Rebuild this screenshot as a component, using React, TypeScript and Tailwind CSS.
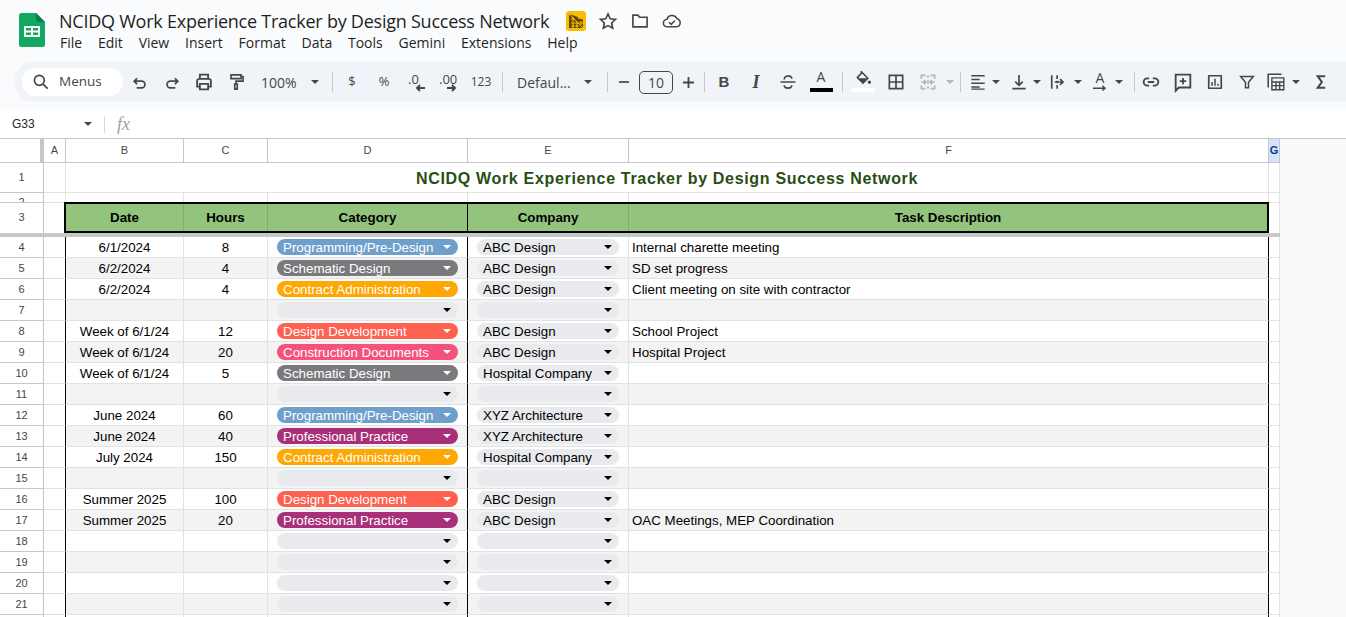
import React from "react";

const C = "#444746";

function Ic({ children, size = "w-5 h-5", fill = false }: { children: React.ReactNode; size?: string; fill?: boolean }) {
  return (
    <svg viewBox="0 0 24 24" className={size} fill={fill ? C : "none"} stroke={fill ? "none" : C} strokeWidth={2} strokeLinejoin="miter">
      {children}
    </svg>
  );
}

function Caret({ color = C, w = "w-2", h = "h-1" }: { color?: string; w?: string; h?: string }) {
  return (
    <svg viewBox="0 0 8 4" className={`${w} ${h}`}>
      <polygon points="0,0 8,0 4,4" fill={color} />
    </svg>
  );
}

function Slot({ children, className = "w-8" }: { children?: React.ReactNode; className?: string }) {
  return <div className={`${className} h-7 shrink-0 flex items-center justify-center`}>{children}</div>;
}

function Sep({ className }: { className: string }) {
  return <div className={`w-px h-5 shrink-0 bg-[#c7c7c7] ${className}`} />;
}

const Undo = () => (
  <Ic><path d="M8.500 7.500 5 11l3.500 3.500M5.500 11H14a4 4 0 0 1 0 8H8" /></Ic>
);
const Redo = () => (
  <Ic><path d="M15.500 7.500 19 11l-3.500 3.500M18.500 11H10a4 4 0 0 0 0 8h6" /></Ic>
);
const Print = () => (
  <Ic size="w-[22px] h-[22px]">
    <path d="M7.500 8V4h9v4" />
    <path d="M7 17H4.500v-6a2.500 2.500 0 0 1 2.500-2.500h10a2.500 2.500 0 0 1 2.500 2.500v6H17" />
    <path d="M7.500 14h9v6h-9z" />
  </Ic>
);
const Paint = () => (
  <Ic>
    <path d="M6 3.500h12v4.500H6zM18 5.500h2.500v5.500H12v3" />
    <path d="M10.500 14.500h3v6h-3z" />
  </Ic>
);
const DecLess = () => (
  <div className="relative w-7 h-6">
    <span className="absolute left-[6px] top-0 text-[13px] font-medium text-[#444746]">.0</span>
    <svg viewBox="0 0 10 8" className="absolute left-[13px] top-[14px] w-[10px] h-2">
      <path d="M10 4H2M5 1 2 4l3 3" fill="none" stroke={C} strokeWidth={2} />
    </svg>
  </div>
);
const DecMore = () => (
  <div className="relative w-7 h-6">
    <span className="absolute left-[5px] top-0 text-[13px] font-medium text-[#444746]">.00</span>
    <svg viewBox="0 0 10 8" className="absolute left-[13px] top-[14px] w-[10px] h-2">
      <path d="M0 4h8M5 1l3 3-3 3" fill="none" stroke={C} strokeWidth={2} />
    </svg>
  </div>
);

function Pill({ label, color, wide }: { label?: string; color?: string; wide: boolean }) {
  const colored = !!color;
  return (
    <div
      className={`${wide ? "w-[181px]" : "w-[142px]"} ml-[9px] h-4 mt-[2px] rounded-full flex items-center pl-[6px] pr-[7px] justify-between ${colored ? "text-white" : "text-black"}`}
      style={{ backgroundColor: color ?? "#e8eaed" }}
    >
      <span className="leading-4 pt-[2px] whitespace-nowrap">{label}</span>
      <Caret color={colored ? "#ffffff" : "#000000"} />
    </div>
  );
}

type Row = { n: number; date?: string; hours?: string; cat?: [string, string]; co?: string; task?: string };

const PROG: [string, string] = ["Programming/Pre-Design", "#6fa0cb"];
const SCH: [string, string] = ["Schematic Design", "#7a7a7e"];
const CA: [string, string] = ["Contract Administration", "#ffa703"];
const DD: [string, string] = ["Design Development", "#ff6150"];
const CD: [string, string] = ["Construction Documents", "#f4527c"];
const PP: [string, string] = ["Professional Practice", "#a92f7b"];

const rows: Row[] = [
  { n: 4, date: "6/1/2024", hours: "8", cat: PROG, co: "ABC Design", task: "Internal charette meeting" },
  { n: 5, date: "6/2/2024", hours: "4", cat: SCH, co: "ABC Design", task: "SD set progress" },
  { n: 6, date: "6/2/2024", hours: "4", cat: CA, co: "ABC Design", task: "Client meeting on site with contractor" },
  { n: 7 },
  { n: 8, date: "Week of 6/1/24", hours: "12", cat: DD, co: "ABC Design", task: "School Project" },
  { n: 9, date: "Week of 6/1/24", hours: "20", cat: CD, co: "ABC Design", task: "Hospital Project" },
  { n: 10, date: "Week of 6/1/24", hours: "5", cat: SCH, co: "Hospital Company" },
  { n: 11 },
  { n: 12, date: "June 2024", hours: "60", cat: PROG, co: "XYZ Architecture" },
  { n: 13, date: "June 2024", hours: "40", cat: PP, co: "XYZ Architecture" },
  { n: 14, date: "July 2024", hours: "150", cat: CA, co: "Hospital Company" },
  { n: 15 },
  { n: 16, date: "Summer 2025", hours: "100", cat: DD, co: "ABC Design" },
  { n: 17, date: "Summer 2025", hours: "20", cat: PP, co: "ABC Design", task: "OAC Meetings, MEP Coordination" },
  { n: 18 },
  { n: 19 },
  { n: 20 },
  { n: 21 },
];

const hdrCell = "shrink-0 flex items-center justify-center border-r border-[#c7c7c7] text-[11px] text-[#444746]";

function RowHead({ n, className = "" }: { n?: number; className?: string }) {
  return (
    <div className={`w-[44px] shrink-0 flex items-center justify-center border-r border-b border-[#c7c7c7] text-[11px] text-[#444746] bg-white ${className}`}>
      {n}
    </div>
  );
}

export default function App() {
  return (
    <div className="w-[1346px] h-[617px] overflow-hidden bg-white flex flex-col font-['Liberation_Sans',Arial,sans-serif]">
      {/* top chrome */}
      <div className="h-[110px] shrink-0 bg-[#f9fbfd] flex flex-col">
        <div className="h-[62px] flex items-start">
          <svg viewBox="0 0 26 34" className="w-[26px] h-[34px] ml-[19px] mt-[13px] shrink-0">
            <path d="M2.500 0H17l9 9v22.500a2.500 2.500 0 0 1-2.500 2.500h-21A2.500 2.500 0 0 1 0 31.500v-29A2.500 2.500 0 0 1 2.500 0z" fill="#11a861" />
            <path d="M17 0l9 9h-6.500A2.500 2.500 0 0 1 17 6.500z" fill="#0d7d48" />
            <path d="M5 13h16v11H5z M7 15v2.500h5V15z M14 15v2.500h5V15z M7 19.500V22h5v-2.500z M14 19.500V22h5v-2.500z" fill="#ffffff" fillRule="evenodd" />
          </svg>
          <div className="ml-[14px] flex flex-col font-['Open_Sans',sans-serif] text-[#1f1f1f]">
            <div className="flex items-center h-[25px] mt-[8px]">
              <span className="text-[18px] leading-6 whitespace-nowrap w-[507px] tracking-[-0.24px]">NCIDQ Work Experience Tracker by Design Success Network</span>
              <div className="w-5 h-5 rounded-[3px] bg-[#fbbc04] flex items-center justify-center shrink-0">
                <svg viewBox="0 0 20 20" className="w-5 h-5">
                  <path d="M3 3v14h14V8.500l-5-1v-1.500L3 3z" fill="#5f4a06" />
                  <path d="M2 2l16 16M6 7h2v2H6zM6 11h2v2H6zM6 14.500h2v1.500H6zM10 11h2v2h-2zM14 11h2v2h-2zM10 14.500h2v1.500h-2z" stroke="#fbbc04" strokeWidth={1} fill="none" />
                </svg>
              </div>
              <div className="w-8 h-6 flex items-center justify-center ml-[6px]">
                <svg viewBox="0 0 24 24" className="w-5 h-5" fill="none" stroke={C} strokeWidth={2}>
                  <path d="M12 3.500l2.700 5.800 6.300.8-4.600 4.300 1.200 6.200L12 17.500l-5.600 3.100 1.200-6.200L3 10.100l6.300-.8z" />
                </svg>
              </div>
              <div className="w-8 h-6 flex items-center justify-center">
                <svg viewBox="0 0 24 24" className="w-5 h-5" fill="none" stroke={C} strokeWidth={2}>
                  <path d="M3.500 5h6l2 2.500h9v11.500h-17z" />
                </svg>
              </div>
              <div className="w-8 h-6 flex items-center justify-center">
                <svg viewBox="0 0 24 24" className="w-5 h-5" fill="none" stroke={C} strokeWidth={1.800}>
                  <path d="M6.500 19a4.500 4.500 0 0 1-.6-9A6.500 6.500 0 0 1 18 9.200 5 5 0 0 1 17.500 19z" />
                  <path d="M8.500 13.500l2.500 2.500 4.500-4.500" />
                </svg>
              </div>
            </div>
            <div className="flex items-center h-[22px] mt-[-1px] gap-[15.8px] text-[14px] ml-[1px] text-[#1f1f1f]">
              {["File", "Edit", "View", "Insert", "Format", "Data", "Tools", "Gemini", "Extensions", "Help"].map((m) => (
                <span key={m} className="whitespace-nowrap leading-5">{m}</span>
              ))}
            </div>
          </div>
        </div>
        {/* toolbar */}
        <div className="h-10 ml-[14px] bg-[#f0f4f9] rounded-l-[20px] flex items-center font-['Open_Sans',sans-serif] text-[#444746]">
          <div className="w-[101px] h-7 ml-[8px] mr-px rounded-full bg-white flex items-center shrink-0">
            <svg viewBox="0 0 24 24" className="w-5 h-5 ml-[9px]" fill="none" stroke={C} strokeWidth={2}>
              <circle cx="10" cy="10" r="6" />
              <path d="M14.500 14.500 20 20" />
            </svg>
            <span className="ml-[8px] text-[13.500px] leading-5 mt-[-2px]">Menus</span>
          </div>
          <Slot><Undo /></Slot>
          <Slot><Redo /></Slot>
          <Slot><Print /></Slot>
          <Slot><Paint /></Slot>
          <div className="w-[73px] h-7 shrink-0 flex items-center justify-between pl-[9px] pr-[6px]">
            <span className="text-[14px] leading-5 pt-[2px]">100%</span>
            <Caret />
          </div>
          <Sep className="ml-[7px] mr-[3px]" />
          <Slot><span className="text-[13px] font-medium">$</span></Slot>
          <Slot><span className="text-[13px] font-medium">%</span></Slot>
          <Slot><DecLess /></Slot>
          <Slot><DecMore /></Slot>
          <Slot className="w-8 ml-px"><span className="text-[12px]">123</span></Slot>
          <Sep className="ml-[5px]" />
          <div className="w-[75px] ml-[14px] h-7 shrink-0 flex items-center justify-between">
            <span className="text-[14px]">Defaul...</span>
            <Caret />
          </div>
          <Sep className="ml-[15px]" />
          <Slot className="w-[31px]">
            <svg viewBox="0 0 12 2" className="w-[10px] h-[2px]"><rect width="12" height="2" fill={C} /></svg>
          </Slot>
          <div className="w-[34px] h-[23px] rounded-[5px] border border-[#444746] flex items-center justify-center text-[14px] shrink-0">10</div>
          <Slot className="w-[30px]">
            <svg viewBox="0 0 12 12" className="w-[11px] h-[11px]"><path d="M5 0h2v5h5v2H7v5H5V7H0V5h5z" fill={C} /></svg>
          </Slot>
          <Sep className="ml-px mr-[3px]" />
          <Slot><span className="font-['Liberation_Sans',sans-serif] font-bold text-[15px]">B</span></Slot>
          <Slot><span className="font-['Liberation_Serif',serif] font-bold italic text-[18px]">I</span></Slot>
          <Slot>
            <Ic><path d="M3 12h18M7.500 9c0-5.500 9-5.500 9-1M7.500 16c0 4.500 9 4.500 9 0" /></Ic>
          </Slot>
          <div className="w-8 h-7 ml-px shrink-0 flex flex-col items-center justify-start">
            <span className="text-[14px] leading-[18px] font-medium text-[#444746]">A</span>
            <div className="w-[23px] h-1 bg-black mt-[2px]" />
          </div>
          <Sep className="ml-[5px] mr-[4px]" />
          <div className="w-8 h-7 shrink-0 flex flex-col items-center">
            <svg viewBox="0 0 22 20" className="w-[18px] h-4 mt-[3px]">
              <path d="M9 1l8 8-6 6-7-7 5-5z" fill="none" stroke={C} strokeWidth={2} />
              <path d="M4 9h12l-5 6z" fill={C} />
              <circle cx="19" cy="14" r="2" fill={C} />
            </svg>
            <div className="w-[23px] h-1 bg-white mt-[1px]" />
          </div>
          <Slot className="w-8 ml-px">
            <Ic><path d="M4 4h16v16H4zM12 4v16M4 12h16" /></Ic>
          </Slot>
          <Slot>
            <svg viewBox="0 0 24 24" className="w-5 h-5" fill="none" stroke="#b4b6b8" strokeWidth={2}>
              <path d="M9 4H4v4M15 4h5v4M9 20H4v-4M15 20h5v-4M12 4v3M12 10v4M12 17v3M4 12h5M7 9.500 9.500 12 7 14.500M20 12h-5M17 9.500 14.500 12l2.500 2.500" />
            </svg>
          </Slot>
          <Slot className="w-3"><Caret color="#b4b6b8" /></Slot>
          <Sep className="ml-[4px] mr-[5px]" />
          <Slot className="w-6">
            <Ic><path d="M4 4.500h16M4 9h10M4 13.500h16M4 18h10M4 20.500h16" strokeWidth={1.700} /></Ic>
          </Slot>
          <Slot className="w-3"><Caret /></Slot>
          <Slot className="w-6 ml-[5px]">
            <Ic><path d="M12 3.500v12M7.500 11.500l4.500 4.500 4.500-4.500M4 20h16" /></Ic>
          </Slot>
          <Slot className="w-3"><Caret /></Slot>
          <Slot className="w-6 ml-[3px]">
            <Ic><path d="M4.500 4v16M11 4v4.500M11 10.500v3M11 15.500V20M8 12h10M14.500 8.500 18 12l-3.500 3.500" /></Ic>
          </Slot>
          <Slot className="w-3 ml-[2px]"><Caret /></Slot>
          <div className="w-6 ml-[4px] h-7 shrink-0 relative flex justify-center">
            <span className="text-[14px] leading-5 font-medium">A</span>
            <svg viewBox="0 0 18 8" className="absolute left-[5px] top-[17px] w-[14px] h-2">
              <path d="M0 3h15M12 0l3.500 3L12 6" fill="none" stroke={C} strokeWidth={1.800} />
            </svg>
          </div>
          <Slot className="w-3 ml-px"><Caret /></Slot>
          <Sep className="ml-[9px]" />
          <Slot>
            <Ic size="w-[22px] h-[22px]"><path d="M10 8H8a4 4 0 0 0 0 8h2M14 8h2a4 4 0 0 1 0 8h-2M8.500 12h7" /></Ic>
          </Slot>
          <Slot>
            <Ic size="w-[22px] h-[22px]"><path d="M4 4h16v14H7.500L4 21.500zM12 7.500v7M8.500 11h7" /></Ic>
          </Slot>
          <Slot>
            <Ic><path d="M4.500 4.500h15v15h-15z" strokeLinejoin="round" /><path d="M8.500 12v4.500M12 8v8.500M15.500 14v2.500" strokeWidth={1.800} /></Ic>
          </Slot>
          <Slot>
            <Ic size="w-[18px] h-[18px]"><path d="M3.500 4.500h17l-6.500 8v7h-4v-7z" /></Ic>
          </Slot>
          <Slot className="w-6 ml-px">
            <Ic size="w-[22px] h-[22px]">
              <path d="M3.500 18V3.500H18" strokeWidth={1.700} />
              <path d="M7.500 7.500h13v13h-13zM7.500 12h13M7.500 16h13M12 12v8M16 12v8" strokeWidth={1.500} />
            </Ic>
          </Slot>
          <Slot className="w-3 ml-[2px]"><Caret /></Slot>
          <Slot className="w-8 ml-[3px]">
            <Ic><path d="M17 5H8l5 7-5 7h9" strokeWidth={2.400} /></Ic>
          </Slot>
        </div>
        <div className="flex-1" />
      </div>

      {/* formula bar */}
      <div className="h-[28px] shrink-0 bg-white flex items-center text-[#1f1f1f]">
        <span className="ml-[12px] w-[72px] text-[12px]">G33</span>
        <Caret />
        <div className="w-px h-[17px] bg-[#d9d9d9] ml-[12px]" />
        <span className="ml-[12px] text-[18px] italic font-['Liberation_Serif',serif] text-[#9aa0a6]">fx</span>
      </div>

      {/* grid */}
      <div className="flex-1 min-h-0 flex text-[13.330px] text-black">
        <div className="w-[1280px] shrink-0 flex flex-col">
          {/* column header */}
          <div className="h-[25px] shrink-0 flex border-t border-b border-[#c7c7c7]">
            <div className="w-[44px] shrink-0 flex">
              <div className="w-[40px]" />
              <div className="w-[4px] bg-[#c7c7c7]" />
            </div>
            <div className={`${hdrCell} w-[22px]`}>A</div>
            <div className={`${hdrCell} w-[118px]`}>B</div>
            <div className={`${hdrCell} w-[84px]`}>C</div>
            <div className={`${hdrCell} w-[200px]`}>D</div>
            <div className={`${hdrCell} w-[161px]`}>E</div>
            <div className={`${hdrCell} w-[640px]`}>F</div>
            <div className="w-[11px] shrink-0 flex items-center justify-center bg-[#d3e3fd] border-r border-[#c7c7c7] text-[11px] font-bold text-[#0b3b8c]">G</div>
          </div>
          {/* row 1 */}
          <div className="h-[30px] shrink-0 flex">
            <RowHead n={1} />
            <div className="w-[22px] shrink-0 border-r border-b border-[#e1e3e3]" />
            <div className="w-[1203px] shrink-0 flex items-center justify-center pt-[2px] border-r border-b border-[#e1e3e3] text-[16px] font-bold text-[#274e13] tracking-[0.68px] whitespace-nowrap">
              NCIDQ Work Experience Tracker by Design Success Network
            </div>
            <div className="w-[11px] shrink-0 border-r border-b border-[#e1e3e3]" />
          </div>
          {/* row 2 */}
          <div className="h-[9px] shrink-0 flex overflow-hidden">
            <div className="w-[44px] shrink-0 border-r border-[#c7c7c7] overflow-hidden flex justify-center text-[11px] text-[#444746] leading-[13px] pt-[3px]">2</div>
            <div className="w-[22px] shrink-0 border-r border-[#e1e3e3]" />
            <div className="w-[118px] shrink-0 border-r border-[#e1e3e3]" />
            <div className="w-[84px] shrink-0 border-r border-[#e1e3e3]" />
            <div className="w-[200px] shrink-0 border-r border-[#e1e3e3]" />
            <div className="w-[161px] shrink-0 border-r border-[#e1e3e3]" />
            <div className="w-[640px] shrink-0 border-r border-[#e1e3e3]" />
            <div className="w-[11px] shrink-0 border-r border-[#e1e3e3]" />
          </div>
          {/* row 3 */}
          <div className="h-[31px] shrink-0 flex">
            <div className="w-[44px] shrink-0 flex items-center justify-center pb-[2px] border-t border-r border-[#c7c7c7] text-[11px] text-[#444746]">3</div>
            <div className="w-[20px] shrink-0 border-t border-[#e1e3e3]" />
            <div className="w-[1205px] shrink-0 flex border-2 border-black bg-[#93c47d] font-bold">
              <div className="w-[118px] shrink-0 flex items-center justify-center border-r border-[#7fae69]">Date</div>
              <div className="w-[84px] shrink-0 flex items-center justify-center border-r border-[#7fae69]">Hours</div>
              <div className="w-[200px] shrink-0 flex items-center justify-center border-r border-black">Category</div>
              <div className="w-[161px] shrink-0 flex items-center justify-center border-r border-[#7fae69]">Company</div>
              <div className="w-[638px] shrink-0 flex items-center justify-center">Task Description</div>
            </div>
            <div className="w-[11px] shrink-0 border-t border-r border-[#e1e3e3]" />
          </div>
          <div className="h-1 shrink-0 bg-[#c7c7c7]" />
          {/* data rows */}
          {rows.map((r) => {
            const bg = r.n % 2 === 1 ? "bg-[#f3f3f3]" : "bg-white";
            const line = "border-b border-[#e1e3e3]";
            return (
              <div key={r.n} className="h-[21px] shrink-0 flex">
                <RowHead n={r.n} />
                <div className={`w-[22px] shrink-0 border-r border-r-black ${line} bg-white`} />
                <div className={`w-[118px] shrink-0 flex items-center justify-center pt-[2px] border-r border-r-[#e1e3e3] ${line} ${bg}`}>{r.date}</div>
                <div className={`w-[84px] shrink-0 flex items-center justify-center pt-[2px] border-r border-r-[#e1e3e3] ${line} ${bg}`}>{r.hours}</div>
                <div className={`w-[200px] shrink-0 border-r border-r-black ${line} ${bg}`}>
                  <Pill wide label={r.cat?.[0]} color={r.cat?.[1]} />
                </div>
                <div className={`w-[161px] shrink-0 border-r border-r-[#e1e3e3] ${line} ${bg}`}>
                  <Pill wide={false} label={r.co} />
                </div>
                <div className={`w-[640px] shrink-0 flex items-center pl-[3px] pt-[2px] border-r border-r-black ${line} ${bg}`}>{r.task}</div>
                <div className={`w-[11px] shrink-0 border-r border-r-[#e1e3e3] ${line} bg-white`} />
              </div>
            );
          })}
          {/* partially visible next row */}
          <div className="h-[2px] shrink-0 flex">
            <div className="w-[44px] shrink-0 border-r border-[#c7c7c7]" />
            <div className="w-[22px] shrink-0 border-r border-r-black" />
            <div className="w-[118px] shrink-0 border-r border-[#e1e3e3]" />
            <div className="w-[84px] shrink-0 border-r border-[#e1e3e3]" />
            <div className="w-[200px] shrink-0 border-r border-r-black" />
            <div className="w-[161px] shrink-0 border-r border-[#e1e3e3]" />
            <div className="w-[640px] shrink-0 border-r border-r-black" />
            <div className="w-[11px] shrink-0 border-r border-[#e1e3e3]" />
          </div>
        </div>
        <div className="flex-1 bg-[#f8f9f8] border-t border-[#c7c7c7]" />
      </div>
    </div>
  );
}
